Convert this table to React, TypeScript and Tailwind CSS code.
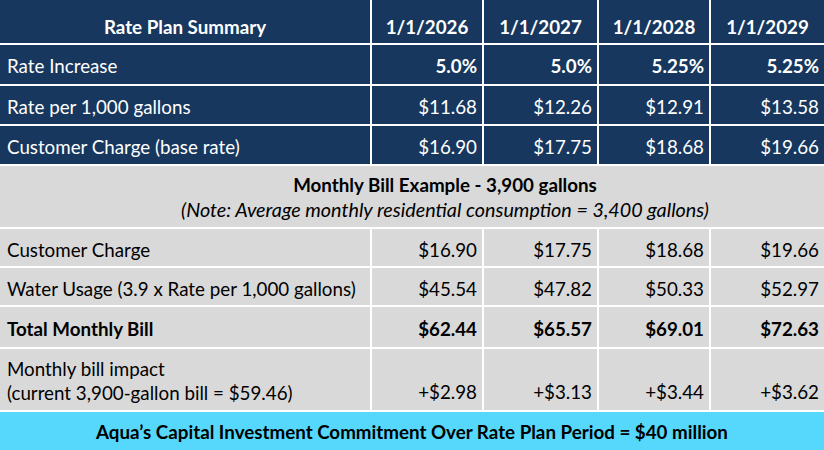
const FONT = "font-['Lato','Liberation_Sans',sans-serif]"

const DATES = ['1/1/2026', '1/1/2027', '1/1/2028', '1/1/2029']

const TOP_ROWS = [
  { label: 'Rate Increase', values: ['5.0%', '5.0%', '5.25%', '5.25%'], bold: true, h: 'h-[39px]' },
  { label: 'Rate per 1,000 gallons', values: ['$11.68', '$12.26', '$12.91', '$13.58'], bold: false, h: 'h-[38px]' },
  { label: 'Customer Charge (base rate)', values: ['$16.90', '$17.75', '$18.68', '$19.66'], bold: false, h: 'h-[38px]' },
]

const BILL_ROWS = [
  { label: 'Customer Charge', values: ['$16.90', '$17.75', '$18.68', '$19.66'], bold: false, h: 'h-[37px]' },
  { label: 'Water Usage (3.9 x Rate per 1,000 gallons)', values: ['$45.54', '$47.82', '$50.33', '$52.97'], bold: false, h: 'h-[37px]' },
  { label: 'Total Monthly Bill', values: ['$62.44', '$65.57', '$69.01', '$72.63'], bold: true, h: 'h-[40px]' },
]

const IMPACT = ['+$2.98', '+$3.13', '+$3.44', '+$3.62']

export default function App() {
  return (
    <div className={`w-[824px] h-[450px] bg-white text-[18.75px] leading-none ${FONT}`}>
      <div className="grid grid-cols-[370px_110px_113px_110px_113px] gap-[2px]">
        {/* header */}
        <div className="h-[43px] bg-[#17375e] text-white font-bold flex items-center justify-center pt-[11px]">
          Rate Plan Summary
        </div>
        {DATES.map((d) => (
          <div key={d} className="h-[43px] bg-[#17375e] text-white font-bold flex items-center justify-center pt-[11px]">
            {d}
          </div>
        ))}

        {TOP_ROWS.map((row) => (
          <>
            <div key={row.label} className={`${row.h} bg-[#17375e] text-white flex items-center pl-[7px] pt-[4px]`}>
              {row.label}
            </div>
            {row.values.map((v, i) => (
              <div
                key={row.label + i}
                className={`${row.h} bg-[#17375e] text-white flex items-center justify-end pr-[5px] pt-[4px] ${row.bold ? 'font-bold' : ''}`}
              >
                {v}
              </div>
            ))}
          </>
        ))}

        {/* bill example title */}
        <div className="col-span-5 h-[61px] bg-[#d9d9d9] text-black flex flex-col items-center justify-center gap-[5px] pl-[66px] pt-[2px]">
          <div className="font-bold">Monthly Bill Example - 3,900 gallons</div>
          <div className="italic text-[19.75px]">(Note: Average monthly residential consumption = 3,400 gallons)</div>
        </div>

        {BILL_ROWS.map((row) => (
          <>
            <div key={row.label} className={`${row.h} bg-[#d9d9d9] text-black flex items-center pl-[7px] pt-[5px] ${row.bold ? 'font-bold' : ''}`}>
              {row.label}
            </div>
            {row.values.map((v, i) => (
              <div
                key={row.label + i}
                className={`${row.h} bg-[#d9d9d9] text-black flex items-center justify-end pr-[5px] pt-[5px] ${row.bold ? 'font-bold' : ''}`}
              >
                {v}
              </div>
            ))}
          </>
        ))}

        <div className="h-[61px] bg-[#d9d9d9] text-black flex flex-col justify-center gap-[5px] pl-[7px] pt-[3px]">
          <div>Monthly bill impact</div>
          <div>(current 3,900-gallon bill = $59.46)</div>
        </div>
        {IMPACT.map((v) => (
          <div key={v} className="h-[61px] bg-[#d9d9d9] text-black flex items-end justify-end pr-[5px] pb-[8px]">
            {v}
          </div>
        ))}

        <div className="col-span-5 h-[38px] bg-[#55d8fc] text-black font-bold flex items-center justify-center pt-[3px]">
          Aqua’s Capital Investment Commitment Over Rate Plan Period = $40 million
        </div>
      </div>
    </div>
  )
}
